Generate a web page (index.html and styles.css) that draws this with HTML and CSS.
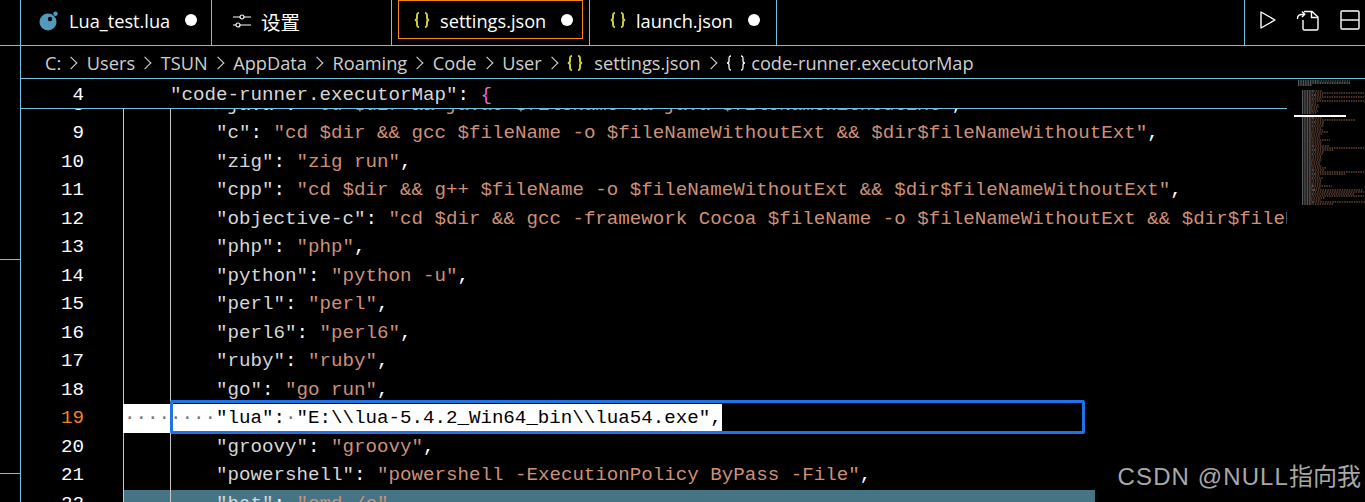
FILE: index.html
```html
<!DOCTYPE html>
<html lang="zh">
<head>
<meta charset="utf-8">
<title>settings.json</title>
<link rel="stylesheet" href="styles.css">
</head>
<body>
<div class="app">
  <header class="tabbar">
    <div class="tabs-start"></div>
    <div class="tab tab-lua">
      <svg class="ico-lua" width="20" height="20" viewBox="0 0 20 20"><circle cx="9" cy="11" r="8.5" fill="#519aba"/><circle cx="11" cy="8" r="2.2" fill="#000"/><circle cx="16.5" cy="2.8" r="2.2" fill="#519aba"/></svg>
      <span class="tab-label">Lua_test.lua</span><span class="dot"></span>
    </div>
    <div class="tab tab-settings">
      <svg width="18" height="16" viewBox="0 0 18 16" fill="none" stroke="#fff" stroke-width="1.2"><path d="M0 4h7M11 4h7M0 12h3M7 12h11"/><circle cx="9" cy="4" r="2"/><circle cx="5" cy="12" r="2"/></svg>
      <span class="tab-label cjk">设置</span>
    </div>
    <div class="tab tab-json">
      <div class="tab-focus">
        <svg class="braces" width="16" height="16" viewBox="0 0 16 16" fill="none" stroke="#cbcb41" stroke-width="2"><path d="M5 1C3 1 3 2 3 4V6C3 7.5 2 8 .8 8C2 8 3 8.5 3 10V12C3 14 3 15 5 15M11 1C13 1 13 2 13 4V6C13 7.5 14 8 15.2 8C14 8 13 8.5 13 10V12C13 14 13 15 11 15"/></svg>
        <span class="tab-label">settings.json</span><span class="dot"></span>
      </div>
    </div>
    <div class="tab tab-launch">
      <svg class="braces" width="16" height="16" viewBox="0 0 16 16" fill="none" stroke="#cbcb41" stroke-width="2"><path d="M5 1C3 1 3 2 3 4V6C3 7.5 2 8 .8 8C2 8 3 8.5 3 10V12C3 14 3 15 5 15M11 1C13 1 13 2 13 4V6C13 7.5 14 8 15.2 8C14 8 13 8.5 13 10V12C13 14 13 15 11 15"/></svg>
      <span class="tab-label">launch.json</span><span class="dot"></span>
    </div>
    <div class="tabs-fill"></div>
    <div class="actions">
      <svg width="16" height="18" viewBox="0 0 16 18" fill="none" stroke="#fff" stroke-width="1.4"><path d="M1 1L15 9L1 17Z" stroke-linejoin="round"/></svg>
      <svg width="23" height="21" viewBox="0 0 23 21" fill="none" stroke="#fff" stroke-width="1.4"><path d="M8 1.5H16L22 7V18.5Q22 20 20.5 20H8.5Q7 20 7 18.5V10"/><path d="M15.500 1.500V7.500H22"/><path d="M1.500 9C1 5.500 4 4 8.500 4.200M6 1.500L8.800 4.200L6 7"/></svg>
      <svg width="20" height="20" viewBox="0 0 20 20" fill="none" stroke="#fff" stroke-width="1.4"><rect x="1" y="1" width="18" height="18" rx="1"/><path d="M1 10H19"/></svg>
    </div>
  </header>

  <div class="body">
    <aside class="sidebar">
      <div class="side-section"></div>
      <div class="side-section"></div>
    </aside>
    <main class="main">
      <nav class="crumbs">
        <span>C:</span><span class="sep"></span><span>Users</span><span class="sep"></span><span>TSUN</span><span class="sep"></span><span>AppData</span><span class="sep"></span><span>Roaming</span><span class="sep"></span><span>Code</span><span class="sep"></span><span>User</span><span class="sep"></span>
        <svg class="crumb-ico" width="16" height="16" viewBox="0 0 16 16" fill="none" stroke="#cbcb41" stroke-width="2"><path d="M5 1C3 1 3 2 3 4V6C3 7.500 2 8 .8 8C2 8 3 8.500 3 10V12C3 14 3 15 5 15M11 1C13 1 13 2 13 4V6C13 7.500 14 8 15.200 8C14 8 13 8.500 13 10V12C13 14 13 15 11 15"/></svg>
        <span>settings.json</span><span class="sep"></span>
        <svg class="crumb-obj" width="20" height="16" viewBox="0 0 20 16" fill="none" stroke="#fff" stroke-width="1.3"><path d="M5 1C3 1 3 2 3 4V6C3 7.500 2 8 1 8C2 8 3 8.500 3 10V12C3 14 3 15 5 15M15 1C17 1 17 2 17 4V6C17 7.500 18 8 19 8C18 8 17 8.500 17 10V12C17 14 17 15 15 15"/></svg>
        <span>code-runner.executorMap</span>
      </nav>
      <div class="editor">
        <section class="pane">
          <div class="sticky line"><span class="num">4</span><span class="pad"></span><span class="txt k">"code-runner.executorMap"</span><span class="p">:</span>&nbsp;<span class="brace">{</span></div>
          <div class="scroll">
            <div class="lines">
              <div class="line"><span class="num">8</span><span class="ws"></span><span class="ws"></span><span class="k">"java"</span><span class="p">:</span>&nbsp;<span class="s">"cd $dir &amp;&amp; javac $fileName &amp;&amp; java $fileNameWithoutExt"</span><span class="p">,</span></div>
              <div class="line"><span class="num">9</span><span class="ws"></span><span class="ws"></span><span class="k">"c"</span><span class="p">:</span>&nbsp;<span class="s">"cd $dir &amp;&amp; gcc $fileName -o $fileNameWithoutExt &amp;&amp; $dir$fileNameWithoutExt"</span><span class="p">,</span></div>
              <div class="line"><span class="num">10</span><span class="ws"></span><span class="ws"></span><span class="k">"zig"</span><span class="p">:</span>&nbsp;<span class="s">"zig run"</span><span class="p">,</span></div>
              <div class="line"><span class="num">11</span><span class="ws"></span><span class="ws"></span><span class="k">"cpp"</span><span class="p">:</span>&nbsp;<span class="s">"cd $dir &amp;&amp; g++ $fileName -o $fileNameWithoutExt &amp;&amp; $dir$fileNameWithoutExt"</span><span class="p">,</span></div>
              <div class="line"><span class="num">12</span><span class="ws"></span><span class="ws"></span><span class="k">"objective-c"</span><span class="p">:</span>&nbsp;<span class="s">"cd $dir &amp;&amp; gcc -framework Cocoa $fileName -o $fileNameWithoutExt &amp;&amp; $dir$fileNameWithoutExt"</span><span class="p">,</span></div>
              <div class="line"><span class="num">13</span><span class="ws"></span><span class="ws"></span><span class="k">"php"</span><span class="p">:</span>&nbsp;<span class="s">"php"</span><span class="p">,</span></div>
              <div class="line"><span class="num">14</span><span class="ws"></span><span class="ws"></span><span class="k">"python"</span><span class="p">:</span>&nbsp;<span class="s">"python -u"</span><span class="p">,</span></div>
              <div class="line"><span class="num">15</span><span class="ws"></span><span class="ws"></span><span class="k">"perl"</span><span class="p">:</span>&nbsp;<span class="s">"perl"</span><span class="p">,</span></div>
              <div class="line"><span class="num">16</span><span class="ws"></span><span class="ws"></span><span class="k">"perl6"</span><span class="p">:</span>&nbsp;<span class="s">"perl6"</span><span class="p">,</span></div>
              <div class="line"><span class="num">17</span><span class="ws"></span><span class="ws"></span><span class="k">"ruby"</span><span class="p">:</span>&nbsp;<span class="s">"ruby"</span><span class="p">,</span></div>
              <div class="line"><span class="num">18</span><span class="ws"></span><span class="ws"></span><span class="k">"go"</span><span class="p">:</span>&nbsp;<span class="s">"go run"</span><span class="p">,</span></div>
              <div class="line current"><span class="num">19</span><span class="sel"><span class="dots">········</span>"lua":<span class="dots">·</span>"E:\\lua-5.4.2_Win64_bin\\lua54.exe",</span><span class="cursor-box"></span></div>
              <div class="line"><span class="num">20</span><span class="ws"></span><span class="ws"></span><span class="k">"groovy"</span><span class="p">:</span>&nbsp;<span class="s">"groovy"</span><span class="p">,</span></div>
              <div class="line"><span class="num">21</span><span class="ws"></span><span class="ws"></span><span class="k">"powershell"</span><span class="p">:</span>&nbsp;<span class="s">"powershell -ExecutionPolicy ByPass -File"</span><span class="p">,</span></div>
              <div class="line match"><span class="num">22</span><span class="match-code"><span class="ws"></span><span class="ws"></span><span class="k">"bat"</span><span class="p">:</span>&nbsp;<span class="s">"cmd /c"</span><span class="p">,</span></span></div>
            </div>
          </div>
        </section>
        <aside class="minimap">
          <svg width="78" height="140" viewBox="1287 79 78 140" fill="none" stroke-width="1">
            <path stroke="#b4b4b4" stroke-dasharray="1 .7" d="M1298 81h20M1298 83h52M1298 85h14M1302 91h11M1302 93h8M1302 95h13M1302 97h8M1302 99h12M1302 101h8M1302 103h8M1302 105h10M1302 107h9M1302 109h9M1302 111h10M1302 113h8M1302 118h11M1302 120h8M1302 122h13M1302 124h8M1302 126h12M1302 128h8M1302 130h8M1302 132h10M1302 134h9M1302 136h9M1302 138h10M1302 140h8M1302 142h10M1302 144h8M1302 146h11M1302 148h8M1302 150h13M1302 152h8M1302 154h12M1302 156h8M1302 158h8M1302 160h10M1302 162h9M1302 164h9M1302 166h10M1302 168h8M1302 170h11M1302 172h8M1302 174h13M1302 176h8M1302 178h12M1302 180h8M1302 182h8M1302 184h10M1302 186h12M1302 188h9M1302 190h13M1302 192h8M1302 194h12M1302 196h8M1302 198h9M1302 200h9M1302 202h11M1302 204h8"/>
            <path stroke="#95654f" stroke-dasharray="1.500 .9" d="M1318 81h32M1313 91h9M1310 93h55M1315 95h8M1310 97h55M1314 99h8M1310 101h55M1310 103h6M1312 105h7M1311 107h8M1311 109h6M1312 111h6M1310 113h7M1313 118h9M1310 120h45M1315 122h9M1310 124h14M1314 126h10M1310 128h12M1310 130h13M1312 132h16M1311 134h12M1311 136h9M1312 138h8M1310 140h20M1312 142h10M1310 144h12M1313 146h16M1310 148h55M1315 150h18M1310 152h14M1314 154h9M1310 156h11M1310 158h12M1312 160h10M1311 162h10M1311 164h9M1312 166h10M1310 168h16M1313 170h12M1310 172h55M1315 174h30M1310 176h10M1314 178h9M1310 180h12M1310 182h11M1312 184h9M1312 186h20M1311 188h10M1313 190h50M1310 192h55M1314 194h40M1310 196h55M1311 198h14M1311 200h10M1313 202h55M1310 204h24"/>
            <path stroke="#fff" stroke-width="2" d="M1294 116H1346"/>
          </svg>
        </aside>
      </div>
    </main>
  </div>
  <div class="watermark"><span class="wm-latin">CSDN @NULL</span>指向我</div>
</div>
</body>
</html>
```

FILE: styles.css
```css
* { box-sizing: border-box; }
html, body { margin: 0; padding: 0; background: #000; }
body { width: 1365px; height: 502px; overflow: hidden; }
.app {
  position: relative;
  width: 1365px;
  height: 502px;
  background: #000;
  color: #fff;
  font-family: "Open Sans", "Noto Sans CJK SC", sans-serif;
  font-size: 18.2px;
  display: flex;
  flex-direction: column;
}

/* tab bar */
.tabbar {
  display: flex;
  height: 46px;
  border-bottom: 1px solid #6fc3df;
  flex: none;
}
.tabs-start { width: 21px; border-right: 1px solid #6fc3df; }
.tab {
  display: flex;
  align-items: center;
  border-right: 1px solid #6fc3df;
  padding-bottom: 3px;
}
.tab-lua { width: 191px; padding-left: 18px; }
.tab-settings { width: 180px; padding-left: 21px; gap: 10px; }
.tab-json { width: 198px; padding: 0 6px 6px; align-items: stretch; }
.tab-launch { width: 187px; padding-left: 20px; }
.tab-focus {
  flex: 1;
  display: flex;
  align-items: center;
  border: 1px solid #f38518;
  padding: 3px 0 0 15px;
}
.ico-lua { margin-right: 10px; margin-top: -1px; }
.braces { margin-right: 10px; margin-top: -3px; }
.tab-label { white-space: nowrap; }
.cjk { font-family: "Noto Sans CJK SC", sans-serif; font-size: 19.5px; }
.dot {
  width: 12px;
  height: 12px;
  border-radius: 50%;
  background: #fff;
  margin-left: 15px;
  margin-top: -3px;
}
.tabs-fill { flex: 1; border-right: 1px solid #6fc3df; }
.actions {
  width: 120px;
  display: flex;
  align-items: center;
  padding: 0 0 5px 15px;
  gap: 20px;
}
.actions svg:last-child { margin-left: 1px; }

/* layout */
.body { flex: 1; display: flex; min-height: 0; }
.sidebar { width: 21px; flex: none; border-right: 1px solid #6fc3df; }
.side-section { height: 214px; border-bottom: 1px solid #6fc3df; }
.main { flex: 1; min-width: 0; display: flex; flex-direction: column; }

/* breadcrumbs */
.crumbs {
  height: 33px;
  flex: none;
  display: flex;
  align-items: center;
  padding: 2px 0 0 24px;
  border-bottom: 1px solid #6fc3df;
  color: #cfcfcf;
  white-space: nowrap;
}
.sep {
  width: 8px;
  height: 8px;
  margin: 0 11.6px 0 6px;
  border-top: 1.3px solid #cfcfcf;
  border-right: 1.3px solid #cfcfcf;
  transform: rotate(45deg) scale(1.15);
  flex: none;
}
.crumb-ico { margin: 0 11px 0 0; }
.crumb-obj { margin: 0 5px 0 0; }

/* editor */
.editor { flex: 1; min-height: 0; display: flex; }
.pane { width: 1266px; flex: none; display: flex; flex-direction: column; min-height: 0; overflow: hidden; }
.scroll { flex: 1; min-height: 0; overflow: hidden; }
.lines { margin-top: -18.5px; }
.line {
  position: relative;
  display: flex;
  align-items: center;
  height: 28.5px;
  font-family: "Liberation Mono", "DejaVu Sans Mono", monospace;
  font-size: 19.17px;
  white-space: pre;
  color: #d7d7d7;
}
.sticky { height: 30px; flex: none; border-bottom: 1px solid #6fc3df; }
.sticky .num, .sticky .k, .sticky .p, .sticky .brace { padding-top: 2px; }
.num { width: 63px; flex: none; text-align: right; color: #fff; margin-right: 39px; }
.pad { width: 47px; flex: none; }
.ws { width: 46.5px; height: 100%; flex: none; border-left: 1px solid #c8c8c8; }
.k { color: #d7d7d7; }
.s { color: #ce9178; }
.p { color: #fff; }
.brace { color: #da70d6; }
.current .num { color: #f38518; }
.sel { background: #fff; color: #000; height: 100%; padding-left: 1px; display: flex; align-items: center; }
.dots { color: #777; }
.cursor-box {
  position: absolute;
  left: 149px;
  top: -4.500px;
  width: 915px;
  height: 34.500px;
  border: 3px solid #1f72e8;
  border-radius: 2px;
}
.match-code {
  display: flex;
  align-items: center;
  width: 972px;
  height: 100%;
  background: #457585;
}

/* minimap */
.minimap { flex: 1; min-width: 0; }
.minimap svg { display: block; }

/* watermark */
.watermark {
  position: absolute;
  right: 4px;
  bottom: 10px;
  color: #a8a8a8;
  font-family: "Liberation Sans", "Noto Sans CJK SC", sans-serif;
  font-size: 24px;
  line-height: 30px;
  white-space: nowrap;
}
.wm-latin { letter-spacing: 1.1px; }
```
